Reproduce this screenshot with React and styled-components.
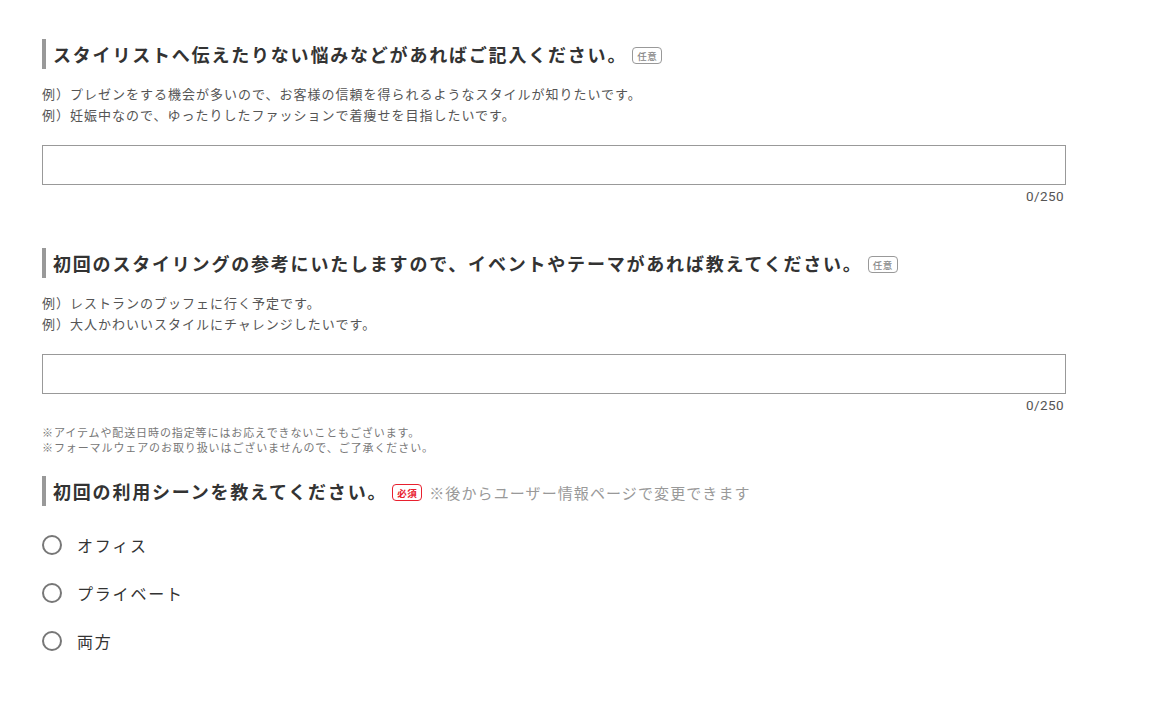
import React, { useState } from 'react';
import styled, { createGlobalStyle } from 'styled-components';

const GlobalStyle = createGlobalStyle`
  body {
    margin: 0;
    background: #fff;
    font-family: "Noto Sans CJK JP", "Noto Sans", sans-serif;
    color: #333;
  }
`;

const Page = styled.div`
  width: 1024px;
  padding: 39px 0 40px 42px;
`;

const Section = styled.section`
  margin-bottom: ${p => p.$gap || 0}px;
`;

const Heading = styled.div`
  display: flex;
  align-items: center;
  height: 30px;
  border-left: 4px solid #999;
  padding-left: 7px;
`;

const Title = styled.h2`
  margin: 0;
  font-size: 18px;
  font-weight: 700;
  letter-spacing: 1.8px;
  color: #333;
  line-height: 30px;
`;

const Badge = styled.span`
  display: inline-flex;
  align-items: center;
  justify-content: center;
  width: 30px;
  height: 17px;
  box-sizing: border-box;
  margin-left: 5px;
  margin-top: 3px;
  border: 1px solid ${p => (p.$required ? '#e8202e' : '#999')};
  border-radius: 4px;
  font-size: 9.5px;
  font-weight: ${p => (p.$required ? 700 : 500)};
  color: ${p => (p.$required ? '#e8202e' : '#888')};
  letter-spacing: 0.5px;
`;

const SideNote = styled.span`
  margin-left: 7px;
  margin-top: 3px;
  font-size: 15px;
  color: #999;
  letter-spacing: 1.1px;
`;

const Examples = styled.div`
  margin-top: 14px;
  font-size: 13px;
  line-height: 21px;
  letter-spacing: 1px;
  color: #555;
`;

const Field = styled.div`
  margin-top: 20px;
`;

const TextBox = styled.input`
  display: block;
  width: 100%;
  height: 40px;
  box-sizing: border-box;
  border: 1px solid #999;
  padding: 0 10px;
  font-family: inherit;
  font-size: 15px;
  color: #333;
  outline: none;
  caret-color: #222;
`;

const Counter = styled.div`
  text-align: right;
  padding-right: 2px;
  margin-top: 3px;
  font-family: Roboto, "Noto Sans", sans-serif;
  font-size: 13.5px;
  font-weight: 400;
  line-height: 16px;
  color: #555;
  letter-spacing: 0.4px;
`;

const Notes = styled.div`
  margin-top: 12px;
  font-size: 11px;
  line-height: 15px;
  color: #777;
  letter-spacing: 0.9px;
`;

const Options = styled.div`
  display: flex;
  flex-direction: column;
  gap: 28px;
  margin-top: 29px;
`;

const Option = styled.label`
  display: flex;
  align-items: center;
  gap: 15px;
  height: 20px;
  cursor: pointer;
`;

const Circle = styled.span`
  width: 20px;
  height: 20px;
  box-sizing: border-box;
  border-radius: 50%;
  border: 2px solid #777;
  display: flex;
  align-items: center;
  justify-content: center;
  &::after {
    content: '';
    width: 10px;
    height: 10px;
    border-radius: 50%;
    background: ${p => (p.$on ? '#555' : 'transparent')};
  }
`;

const OptionText = styled.span`
  font-size: 16px;
  letter-spacing: 1.8px;
  color: #333;
`;

const TextQuestion = ({ title, examples, autoFocus, gap, children }) => {
  const [value, setValue] = useState('');
  return (
    <Section $gap={gap}>
      <Heading>
        <Title>{title}</Title>
        <Badge>任意</Badge>
      </Heading>
      <Examples>
        {examples.map(e => <div key={e}>{e}</div>)}
      </Examples>
      <Field>
        <TextBox
          value={value}
          maxLength={250}
          autoFocus={autoFocus}
          onChange={e => setValue(e.target.value)}
        />
        <Counter>{value.length}/250</Counter>
      </Field>
      {children}
    </Section>
  );
};

const scenes = ['オフィス', 'プライベート', '両方'];

export default function App() {
  const [scene, setScene] = useState(null);
  return (
    <>
      <GlobalStyle />
      <Page>
        <TextQuestion
          title="スタイリストへ伝えたりない悩みなどがあればご記入ください。"
          examples={[
            '例）プレゼンをする機会が多いので、お客様の信頼を得られるようなスタイルが知りたいです。',
            '例）妊娠中なので、ゆったりしたファッションで着痩せを目指したいです。',
          ]}
          autoFocus
          gap={44}
        />
        <TextQuestion
          title="初回のスタイリングの参考にいたしますので、イベントやテーマがあれば教えてください。"
          examples={[
            '例）レストランのブッフェに行く予定です。',
            '例）大人かわいいスタイルにチャレンジしたいです。',
          ]}
          gap={21}
        >
          <Notes>
            <div>※アイテムや配送日時の指定等にはお応えできないこともございます。</div>
            <div>※フォーマルウェアのお取り扱いはございませんので、ご了承ください。</div>
          </Notes>
        </TextQuestion>
        <Section>
          <Heading>
            <Title>初回の利用シーンを教えてください。</Title>
            <Badge $required>必須</Badge>
            <SideNote>※後からユーザー情報ページで変更できます</SideNote>
          </Heading>
          <Options>
            {scenes.map(s => (
              <Option key={s} onClick={() => setScene(s)}>
                <Circle $on={scene === s} />
                <OptionText>{s}</OptionText>
              </Option>
            ))}
          </Options>
        </Section>
      </Page>
    </>
  );
}
